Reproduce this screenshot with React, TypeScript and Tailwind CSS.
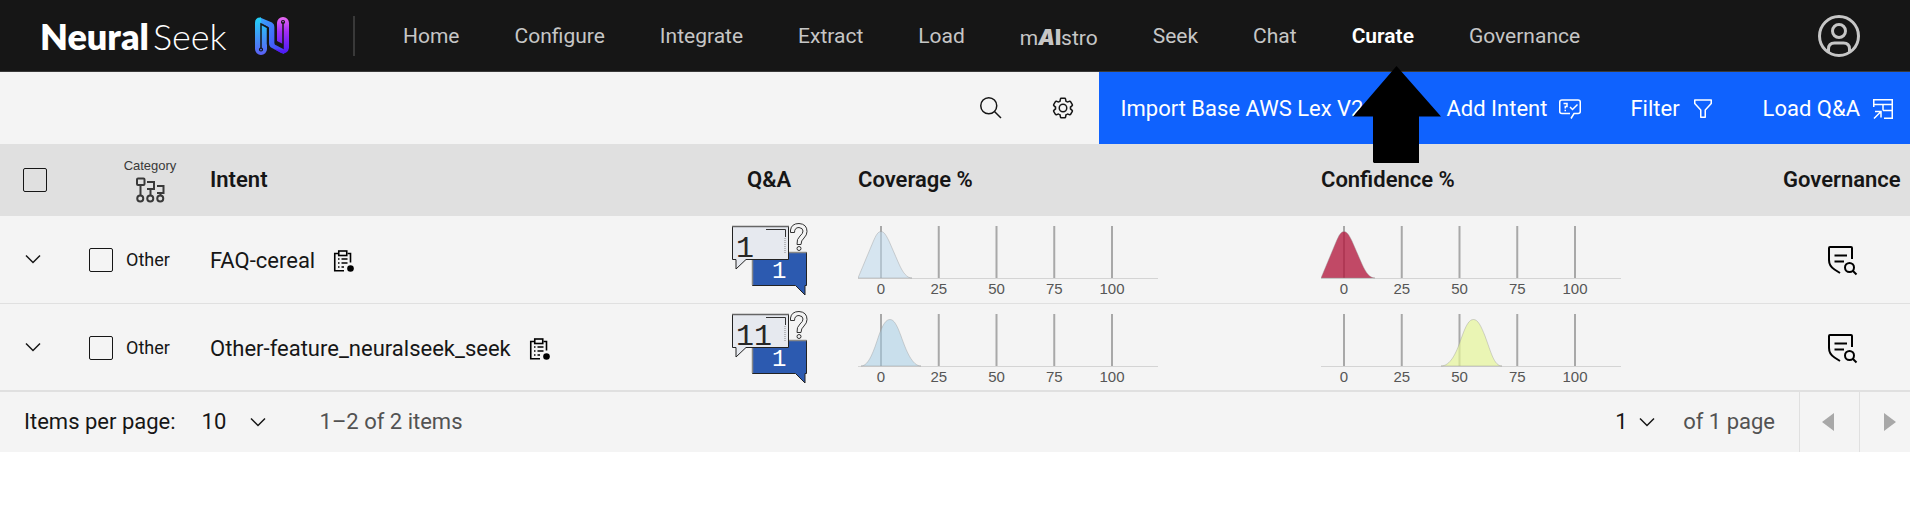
import React from 'react';

const NAV = ['Home', 'Configure', 'Integrate', 'Extract', 'Load', 'mAIstro', 'Seek', 'Chat', 'Curate', 'Governance'];

function LogoMark() {
  return (
    <svg width="36" height="40" viewBox="0 0 36 40" fill="none" aria-hidden="true">
      <defs>
        <linearGradient id="markLeft" x1="0" y1="0" x2="0" y2="1">
          <stop offset="0" stopColor="#22d3f7" />
          <stop offset="1" stopColor="#5b5ff5" />
        </linearGradient>
        <linearGradient id="markRight" x1="0" y1="0" x2="0" y2="1">
          <stop offset="0" stopColor="#e86af0" />
          <stop offset="0.4" stopColor="#a32df5" />
          <stop offset="1" stopColor="#4a1cf5" />
        </linearGradient>
        <linearGradient id="markMid" x1="0" y1="0" x2="1" y2="1">
          <stop offset="0" stopColor="#38a8fb" />
          <stop offset="1" stopColor="#4a35f7" />
        </linearGradient>
      </defs>
      <path d="M6 1.500L18 6.500Q20.500 8 20.500 11V27.500L30 32.500V38L18 32Q15 30.500 15 27V11.500L7 7Z" fill="url(#markMid)" />
      <path d="M1 7Q1 1 7 1.500V7L13 11V33A6 6 0 0 1 1 33Z" fill="url(#markLeft)" />
      <path d="M23 7A6 6 0 0 1 35 7V32A6 6 0 0 1 27 37L20 33L29 34V28L23 25Z" fill="url(#markRight)" />
      <path d="M7 33V8L13.500 11.500V28Q13.500 31 16 33M29 6V32L21.500 28V10" stroke="#161616" strokeWidth="1.500" />
      <circle cx="7" cy="33.500" r="1.500" stroke="#161616" strokeWidth="1.200" />
      <circle cx="29" cy="6" r="1.500" stroke="#161616" strokeWidth="1.200" />
    </svg>
  );
}

function UserIcon() {
  return (
    <svg width="42" height="42" viewBox="0 0 42 42" fill="none" stroke="#c6c6c6" strokeWidth="3" aria-hidden="true">
      <circle cx="21" cy="21" r="19.500" />
      <circle cx="21" cy="16" r="6.500" />
      <path d="M10.500 37V34Q10.500 28 16.500 28H25.500Q31.500 28 31.500 34V37" />
    </svg>
  );
}

function SearchIcon() {
  return (
    <svg width="24" height="24" viewBox="0 0 24 24" fill="none" stroke="#161616" strokeWidth="1.500" aria-hidden="true">
      <circle cx="9.750" cy="9.750" r="8" />
      <path d="M15.500 15.500L22 22" />
    </svg>
  );
}

function GearIcon() {
  return (
    <svg width="24" height="24" viewBox="0 0 32 32" fill="#161616" aria-hidden="true">
      <path d="M27,16.76c0-.25,0-.5,0-.76s0-.51,0-.77l1.92-1.68A2,2,0,0,0,29.3,11L26.94,7a2,2,0,0,0-1.73-1,2,2,0,0,0-.64.1l-2.43.82a11.35,11.35,0,0,0-1.31-.75l-.51-2.52a2,2,0,0,0-2-1.61H13.64a2,2,0,0,0-2,1.61l-.51,2.52a11.48,11.48,0,0,0-1.32.75L7.43,6.06A2,2,0,0,0,6.79,6,2,2,0,0,0,5.06,7L2.7,11a2,2,0,0,0,.41,2.51L5,15.24c0,.25,0,.5,0,.76s0,.51,0,.77L3.11,18.45A2,2,0,0,0,2.7,21L5.06,25a2,2,0,0,0,1.73,1,2,2,0,0,0,.64-.1l2.43-.82a11.35,11.35,0,0,0,1.31.75l.51,2.52a2,2,0,0,0,2,1.61h4.72a2,2,0,0,0,2-1.61l.51-2.52a11.48,11.48,0,0,0,1.32-.75l2.42.82a2,2,0,0,0,.64.1,2,2,0,0,0,1.73-1L29.3,21a2,2,0,0,0-.41-2.51ZM25.21,24l-3.43-1.16a8.86,8.86,0,0,1-2.71,1.57L18.36,28H13.64l-.71-3.55a9.36,9.36,0,0,1-2.7-1.57L6.79,24,4.43,20l2.72-2.4a8.9,8.9,0,0,1,0-3.13L4.43,12,6.79,8l3.43,1.16a8.86,8.86,0,0,1,2.71-1.57L13.64,4h4.72l.71,3.55a9.36,9.36,0,0,1,2.7,1.57L25.21,8,27.57,12l-2.72,2.4a8.9,8.9,0,0,1,0,3.13L27.57,20Z" />
      <path d="M16,22a6,6,0,1,1,6-6A5.94,5.94,0,0,1,16,22Zm0-10a3.91,3.91,0,0,0-4,4,3.91,3.91,0,0,0,4,4,3.91,3.91,0,0,0,4-4A3.91,3.91,0,0,0,16,12Z" />
    </svg>
  );
}

function ImportIcon() {
  return (
    <svg width="24" height="24" viewBox="0 0 24 24" fill="none" stroke="currentColor" strokeWidth="1.500" aria-hidden="true">
      <path d="M12 2V16M6 10L12 16L18 10M3 17V21H21V17" />
    </svg>
  );
}

function AddIntentIcon() {
  return (
    <svg width="24" height="24" viewBox="0 0 24 24" fill="none" stroke="currentColor" strokeWidth="1.500" aria-hidden="true">
      <path d="M13 21.500L16 16.500H20Q22.250 16.500 22.250 14.500V5Q22.250 3 20 3H4Q1.750 3 1.750 5V14.500Q1.750 16.500 4 16.500H12" />
      <path d="M5.500 6.500H9V9.500H7.250V11.500M7.250 12.800V14.200M12 10L14.500 12.500L19.500 7.500" />
    </svg>
  );
}

function FilterIcon() {
  return (
    <svg width="24" height="24" viewBox="0 0 24 24" fill="none" stroke="currentColor" strokeWidth="1.500" aria-hidden="true">
      <path d="M3.750 3H20.250V6.500L14.250 13V20.250H9.750V13L3.750 6.500Z" strokeLinejoin="round" />
    </svg>
  );
}

function LoadIcon() {
  return (
    <svg width="24" height="24" viewBox="0 0 24 24" fill="none" stroke="currentColor" strokeWidth="1.500" aria-hidden="true">
      <path d="M2.750 10V2.750H21.250V21.250H13M2.750 7.500H21.250M12 7.500V13.500M12 13.500H21.250" />
      <path d="M3 21.500L9.500 15M4 14.500H10V20.500" />
    </svg>
  );
}

function CategoryIcon() {
  return (
    <svg width="30" height="26" viewBox="0 0 30 26" fill="none" stroke="#393939" strokeWidth="2" aria-hidden="true">
      <rect x="2" y="1.500" width="7.500" height="6.500" rx="1" />
      <path d="M5.500 8V18M12 5H19V12H12M15.500 12V18M22 9H28.500V16H22M25.500 16V19" />
      <circle cx="5.250" cy="21.500" r="3" />
      <circle cx="15.250" cy="21.500" r="3" />
      <circle cx="25.250" cy="21.500" r="3" />
    </svg>
  );
}

function ClipboardIcon() {
  return (
    <svg width="24" height="24" viewBox="0 0 24 24" fill="none" stroke="#000" strokeWidth="1.600" aria-hidden="true">
      <path d="M7.500 4.500H3.750V21.750H13M16.500 4.500H19.500V13.500" />
      <rect x="7.750" y="2" width="8" height="4.500" />
      <path d="M7 10H8.500M10.500 10H16.500M7 14H8.500M10.500 14H16.500M7 18H8.500M10.500 18H13" />
      <circle cx="19.500" cy="19.500" r="3.300" fill="#000" stroke="none" />
    </svg>
  );
}

function PolicyIcon() {
  return (
    <svg width="32" height="32" viewBox="0 0 32 32" fill="none" stroke="#000" strokeWidth="2" aria-hidden="true">
      <path d="M14 29L8.500 25.500Q3 22 3 16V4Q3 3 4 3H25Q26 3 26 4V15" />
      <path d="M8.500 11.500H21M8.500 17.500H18" />
      <circle cx="23.500" cy="23.500" r="4.500" />
      <path d="M26.500 26.500L30.500 30.500" />
    </svg>
  );
}

function Chevron() {
  return (
    <svg width="24" height="24" viewBox="0 0 24 24" fill="none" stroke="#161616" strokeWidth="1.500" aria-hidden="true">
      <path d="M5 8.500L12 15.500L19 8.500" />
    </svg>
  );
}

function QaBadge({ questions, answers }: { questions: string; answers: string }) {
  return (
    <div className="relative h-[74px] w-[76px]">
      <svg width="76" height="74" viewBox="0 0 76 74" fill="none" aria-hidden="true">
        <path d="M20.500 30.500H74.500V63.500H73V73L63.500 63.500H20.500Z" fill="#2c5ab0" stroke="#222" />
        <path d="M20.500 63V30.500H74.500" stroke="#888" strokeWidth="1.500" />
        <path d="M.500 4.500H56.500V37.500H14L4 47V37.500H.500Z" fill="#e6e9ef" stroke="#222" />
        <path d="M0 4.500H57" stroke="#666" strokeWidth="1.500" />
        <path d="M34 7.500H53.500V15" stroke="#333" />
        <path d="M53 16V31" stroke="#888" strokeDasharray="1 1" />
        <path
          d="M58.500 10.500V8Q59.500 1.500 67 1.500Q75 2 75 9.500Q75 13 72 16Q69 18.500 69 22.500H65Q64.500 17 68 14Q71 11.500 71 9Q71 6 67 5.500Q62.500 5.500 62.500 10.500Z"
          stroke="#333"
        />
        <circle cx="67" cy="26.500" r="2" stroke="#333" />
      </svg>
      <span className="absolute left-1 top-[12px] font-[Liberation_Mono] text-[30px] leading-[30px] text-[#262626]">
        {questions}
      </span>
      <span className="absolute left-10 top-[37px] font-[Liberation_Mono] text-[24px] leading-[26px] text-white">
        {answers}
      </span>
    </div>
  );
}

function DensityChart({ path, fill, label }: { path: string; fill: string; label: string }) {
  return (
    <svg width="300" height="74" viewBox="0 0 300 74" role="img" aria-label={label}>
      {[0, 25, 50, 75, 100].map((t, i) => (
        <g key={t}>
          <path d={`M${23 + i * 57.75} 4V56`} stroke="#a8a8a8" strokeWidth="2" />
          <text x={23 + i * 57.75} y="72" textAnchor="middle" fill="#565656" className="font-[Liberation_Sans] text-[15px]">
            {t}
          </text>
        </g>
      ))}
      <path d="M0 56.500H300" stroke="#d4d4d4" />
      <path d={path} fill={fill} stroke="#999" strokeOpacity="0.400" />
    </svg>
  );
}

const BELL_AT_ZERO = 'M0 56L15 20C18 13 20 9.500 23 9.500C26 9.500 28 13 31 19L41 42C45 51 49 56 54 56Z';

const ROWS = [
  {
    intent: 'FAQ-cereal',
    questions: '1',
    answers: '1',
    coverage: { path: BELL_AT_ZERO, fill: 'rgba(190,216,236,0.55)' },
    confidence: { path: BELL_AT_ZERO, fill: 'rgba(178,24,62,0.78)' },
  },
  {
    intent: 'Other-feature_neuralseek_seek',
    questions: '11',
    answers: '1',
    coverage: {
      path: 'M3 56C11 56 16 40 21 25C25 14 28 9.500 32 9.500C36 9.500 39 15 43 26C48 40 54 56 63 56Z',
      fill: 'rgba(166,206,230,0.55)',
    },
    confidence: {
      path: 'M120 56C129 56 135 44 140 29C145 15 148 9.500 152.500 9.500C157 9.500 160 16 164 26C170 42 173 56 181 56Z',
      fill: 'rgba(230,245,152,0.7)',
    },
  },
];

const CHECK = 'block size-6 appearance-none rounded-[2px] border border-[#161616] bg-transparent checked:bg-[#161616]';

export default function App() {
  return (
    <div className="relative min-w-[1600px] bg-white font-[Roboto,sans-serif] text-[22px] leading-7 text-[#161616]">
      <header className="flex h-[72px] items-center border-b border-[#393939] bg-[#161616] text-[#c6c6c6]">
        <a href="#home" className="flex items-center pl-10 text-white">
          <span className="w-[214px] whitespace-nowrap font-[Lato] text-[36px] leading-10">
            <b className="font-extrabold">Neural</b>
            <span className="pl-1 font-light">Seek</span>
          </span>
          <LogoMark />
        </a>
        <nav className="ml-[63px] flex flex-1 items-center gap-[55px] border-l-2 border-[#393939] py-1 pl-12 text-[21px]">
          {NAV.map((n) => (
            <a
              key={n}
              href={'#' + n.toLowerCase()}
              aria-current={n === 'Curate' ? 'page' : undefined}
              className={n === 'Curate' ? 'font-semibold text-white' : ''}
            >
              {n === 'mAIstro' ? (
                <span className="block pt-1">
                  m
                  <b className="font-[Inter] font-black">
                    <i>A</i>I
                  </b>
                  stro
                </span>
              ) : (
                n
              )}
            </a>
          ))}
        </nav>
        <button type="button" aria-label="Account" className="mr-[50px]">
          <UserIcon />
        </button>
      </header>

      <div className="flex h-[72px] items-stretch justify-end bg-[#f4f4f4]">
        <button type="button" aria-label="Search" className="grid w-[72px] place-items-center">
          <SearchIcon />
        </button>
        <button type="button" aria-label="Settings" className="grid w-[72px] place-items-center">
          <GearIcon />
        </button>
        <div className="flex items-center gap-12 bg-[#0f62fe] pl-[22px] pr-[15px] pt-px text-white">
          {[
            { label: 'Import Base AWS Lex V2', icon: <ImportIcon /> },
            { label: 'Add Intent', icon: <AddIntentIcon /> },
            { label: 'Filter', icon: <FilterIcon /> },
            { label: 'Load Q&A', icon: <LoadIcon /> },
          ].map((a) => (
            <button key={a.label} type="button" className="flex items-center gap-[11px] whitespace-nowrap">
              {a.label}
              {a.icon}
            </button>
          ))}
        </div>
      </div>

      <table className="w-full table-fixed border-collapse bg-[#f4f4f4] text-left">
        <colgroup>
          <col className="w-[89px]" />
          <col className="w-[37px]" />
          <col className="w-[84px]" />
          <col className="w-[522px]" />
          <col className="w-[126px]" />
          <col className="w-[463px]" />
          <col />
          <col className="w-[135px]" />
        </colgroup>
        <thead>
          <tr className="h-[72px] bg-[#e0e0e0]">
            <th className="pl-[23px]">
              <input type="checkbox" aria-label="Select all rows" className={CHECK} />
            </th>
            <th />
            <th>
              <span className="flex w-12 flex-col items-center gap-0.5 font-[Liberation_Sans] text-[13px] font-normal leading-[18px] text-[#393939]">
                Category
                <CategoryIcon />
              </span>
            </th>
            <th className="font-semibold">Intent</th>
            <th className="pl-[15px] font-semibold">Q&amp;A</th>
            <th className="font-semibold">Coverage %</th>
            <th className="font-semibold">Confidence %</th>
            <th className="pl-2 font-semibold">Governance</th>
          </tr>
        </thead>
        <tbody>
          {ROWS.map((r) => (
            <tr key={r.intent} className="h-[87px] border-b border-[#e0e0e0]">
              <td className="pl-[21px]">
                <button type="button" aria-label={'Expand ' + r.intent} className="block">
                  <Chevron />
                </button>
              </td>
              <td className="pt-0.5">
                <input type="checkbox" aria-label={'Select ' + r.intent} className={CHECK} />
              </td>
              <td className="pt-0.5 text-[18px]">Other</td>
              <td className="pt-1">
                <span className="flex items-center gap-4">
                  {r.intent}
                  <ClipboardIcon />
                </span>
              </td>
              <td>
                <QaBadge questions={r.questions} answers={r.answers} />
              </td>
              <td>
                <DensityChart {...r.coverage} label="Coverage distribution" />
              </td>
              <td>
                <DensityChart {...r.confidence} label="Confidence distribution" />
              </td>
              <td className="pl-[51px] pt-0.5">
                <button type="button" aria-label={'Review ' + r.intent} className="block">
                  <PolicyIcon />
                </button>
              </td>
            </tr>
          ))}
        </tbody>
      </table>

      <footer className="flex h-[61px] items-stretch border-t border-[#e0e0e0] bg-[#f4f4f4]">
        <div className="flex items-center pl-6">
          <label htmlFor="page-size">Items per page:</label>
          <span className="relative ml-[26px] flex items-center">
            <select id="page-size" defaultValue="10" className="w-[68px] appearance-none bg-transparent">
              <option>10</option>
            </select>
            <span className="pointer-events-none absolute right-0">
              <Chevron />
            </span>
          </span>
          <span className="ml-[50px] text-[#525252]">1–2 of 2 items</span>
        </div>
        <div className="ml-auto flex items-center">
          <span className="relative flex items-center">
            <select aria-label="Page number" defaultValue="1" className="w-11 appearance-none bg-transparent">
              <option>1</option>
            </select>
            <span className="pointer-events-none absolute right-0">
              <Chevron />
            </span>
          </span>
          <span className="ml-6 mr-6 text-[#525252]">of 1 page</span>
        </div>
        <button type="button" disabled aria-label="Previous page" className="flex w-[60px] items-center border-l border-[#e0e0e0] pl-[22px]">
          <svg width="12" height="18" viewBox="0 0 12 18" fill="#a8a8a8" aria-hidden="true">
            <path d="M12 0V18L0 9Z" />
          </svg>
        </button>
        <button type="button" disabled aria-label="Next page" className="flex w-[51px] items-center border-l border-[#e0e0e0] pl-6">
          <svg width="12" height="18" viewBox="0 0 12 18" fill="#a8a8a8" aria-hidden="true">
            <path d="M0 0V18L12 9Z" />
          </svg>
        </button>
      </footer>

      <svg
        className="pointer-events-none absolute left-[1353px] top-[66px]"
        width="88"
        height="97"
        viewBox="0 0 88 97"
        fill="#000"
        aria-hidden="true"
      >
        <path d="M43.500 0L88 50.500H66V97H21L20 96V50.500H0Z" />
      </svg>
    </div>
  );
}
